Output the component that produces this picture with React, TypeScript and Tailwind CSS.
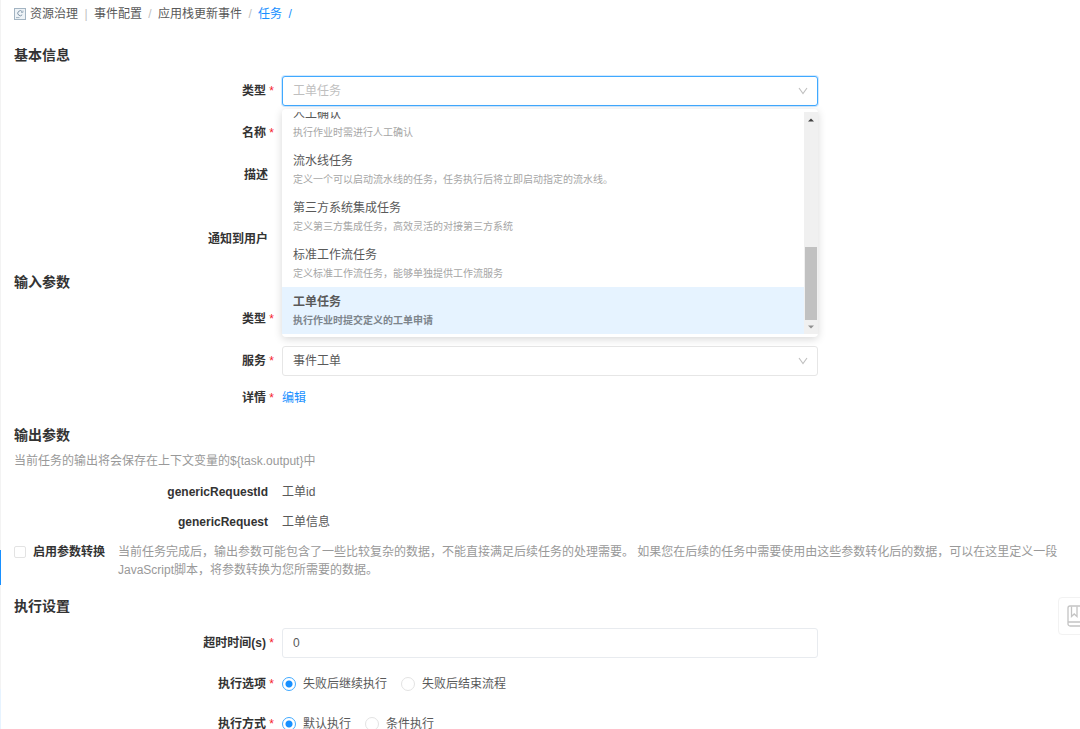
import { ReactNode, useState } from 'react';
import { clsx } from 'clsx';

const taskTypes = [
  { name: '人工确认', desc: '执行作业时需进行人工确认' },
  { name: '流水线任务', desc: '定义一个可以启动流水线的任务，任务执行后将立即启动指定的流水线。' },
  { name: '第三方系统集成任务', desc: '定义第三方集成任务，高效灵活的对接第三方系统' },
  { name: '标准工作流任务', desc: '定义标准工作流任务，能够单独提供工作流服务' },
  { name: '工单任务', desc: '执行作业时提交定义的工单申请' },
];

const fieldBorder = 'border border-[#e8ebef] rounded-[3px] bg-white outline-none';

function SectionTitle({ children }: { children: ReactNode }) {
  return <h2 className="text-sm leading-5 font-bold text-[#333]">{children}</h2>;
}

function Row({
  label,
  htmlFor,
  required,
  className,
  children,
}: {
  label: string;
  htmlFor?: string;
  required?: boolean;
  className?: string;
  children: ReactNode;
}) {
  const Label = htmlFor ? 'label' : 'span';

  return (
    <div className={clsx('grid grid-cols-[1fr_2fr_1fr] items-center', className)}>
      <Label htmlFor={htmlFor} className="flex items-center justify-end pr-2 font-bold text-[#333]">
        {label}
        <span className={clsx('text-right font-normal text-[#f5222d]', required ? 'w-2' : 'w-1.5')}>
          {required && '*'}
        </span>
      </Label>
      {children}
    </div>
  );
}

function Select({ id, options, open }: { id: string; options: string[]; open?: boolean }) {
  return (
    <div className="relative">
      <select
        id={id}
        className={clsx(
          'block w-full h-[30px] pl-[10px] pr-8 appearance-none rounded-[3px] border bg-white outline-none',
          open
            ? 'border-[#40a9ff] text-[#bfbfbf] shadow-[0_0_0_1px_rgba(24,144,255,0.2)]'
            : 'border-[#e6e6e6] text-[#595959]',
        )}
      >
        {options.map((option) => (
          <option key={option}>{option}</option>
        ))}
      </select>
      <svg
        viewBox="0 0 10 10"
        className="absolute right-[10px] top-[10px] size-[10px] pointer-events-none"
        fill="none"
        stroke="#bfbfbf"
        strokeWidth="1.1"
      >
        <path d="M1 2 L5 7.6 L9 2" />
      </svg>
    </div>
  );
}

function TaskTypeMenu() {
  return (
    <div className="absolute top-[33px] inset-x-0 z-10 flex rounded-[4px] bg-white py-[3px] shadow-[0_2px_8px_rgba(0,0,0,0.16)]">
      <ul role="listbox" aria-label="类型" className="flex-1 h-[222px] flex flex-col justify-end overflow-hidden">
        {taskTypes.map((type, index) => {
          const selected = index === taskTypes.length - 1;

          return (
            <li
              key={type.name}
              role="option"
              aria-selected={selected}
              className={clsx('shrink-0 h-[47px] px-[11px] pt-[5px]', selected && 'bg-[#e6f3ff] font-bold')}
            >
              <p className="leading-5 text-[#595959]">{type.name}</p>
              <p className={clsx('text-[10px] leading-[18px]', selected ? 'text-[#7d858c]' : 'text-[#a6a6a6]')}>
                {type.desc}
              </p>
            </li>
          );
        })}
      </ul>
      <div className="w-[14px] flex flex-col items-center justify-end bg-[#f0f0f0]">
        <svg viewBox="0 0 6 4" className="w-[6px] h-1 mt-[6px] mb-auto" fill="#404040">
          <path d="M0 3.5 L3 0.5 L6 3.5 Z" />
        </svg>
        <div className="w-3 h-[73px] bg-[#c1c1c1]" />
        <svg viewBox="0 0 6 4" className="w-[6px] h-1 my-[5px]" fill="#909090">
          <path d="M0 0.5 L3 3.5 L6 0.5 Z" />
        </svg>
      </div>
    </div>
  );
}

function RadioGroup({ name, label, options }: { name: string; label: string; options: string[] }) {
  const [value, setValue] = useState(options[0]);

  return (
    <div role="radiogroup" aria-label={label} className="flex items-center gap-[14px] text-[#595959]">
      {options.map((option) => (
        <label key={option} className="flex items-center gap-[7px]">
          <input
            type="radio"
            name={name}
            checked={value === option}
            onChange={() => setValue(option)}
            className="size-[14px] appearance-none rounded-full border border-[#e3e3e3] bg-white checked:border-[#40a9ff] checked:bg-[radial-gradient(circle,#1890ff_3px,transparent_4px)]"
          />
          {option}
        </label>
      ))}
    </div>
  );
}

function Breadcrumb() {
  return (
    <nav className="flex items-center h-7 text-[#595959]">
      <svg viewBox="0 0 12 12" className="size-3 mr-1" fill="none" stroke="#a3b4c2" strokeWidth="1">
        <rect x="0.5" y="0.5" width="11" height="11" fill="#eef3f7" />
        <path d="M8.2 3.6 A2.5 2.5 0 1 0 8.2 6.8" stroke="#8095a8" />
        <path d="M9 2.5 V4.4 H7 M2 9.6 H5.5" />
      </svg>
      <a href="#governance">资源治理</a>
      <span className="w-4 text-center text-[#bfbfbf]">|</span>
      <a href="#events">事件配置</a>
      <span className="w-4 text-center text-[#bfbfbf]">/</span>
      <a href="#stack">应用栈更新事件</a>
      <span className="w-4 text-center text-[#bfbfbf]">/</span>
      <a href="#task" className="text-[#1890ff]">
        任务
      </a>
      <span className="w-4 text-center text-[#1890ff]">/</span>
    </nav>
  );
}

export default function App() {
  const [timeout, setTimeout] = useState('0');

  return (
    <div className="relative flex h-screen overflow-hidden bg-white text-xs font-['Liberation_Sans','Noto_Sans_CJK_SC',sans-serif]">
      {/* edge of the collapsed side menu */}
      <div className="w-px shrink-0 flex flex-col bg-[#f3f3f3]">
        <div className="mt-[550px] h-[35px] shrink-0 bg-[#1890ff]" />
        <div className="mt-[104px] flex-1 bg-[#e6f3ff]" />
      </div>

      <main className="flex-1 min-w-0 pl-[13px] -mr-[6px]">
        <Breadcrumb />

        <section className="pt-[17px]">
          <SectionTitle>基本信息</SectionTitle>
          <div className="mt-[11px] flex flex-col gap-3">
            <Row label="类型" htmlFor="task-type" required>
              <div className="relative">
                <Select id="task-type" options={['工单任务']} open />
                <TaskTypeMenu />
              </div>
            </Row>
            <Row label="名称" htmlFor="task-name" required>
              <input id="task-name" className={clsx('h-[30px] px-[10px]', fieldBorder)} />
            </Row>
            <Row label="描述" htmlFor="task-desc" className="[&>label]:self-start [&>label]:h-[30px]">
              <textarea id="task-desc" className={clsx('h-[52px] px-[10px] resize-none', fieldBorder)} />
            </Row>
            <Row label="通知到用户" htmlFor="task-notify">
              <input id="task-notify" className={clsx('h-[30px] px-[10px]', fieldBorder)} />
            </Row>
          </div>
        </section>

        <section className="pt-[18px]">
          <SectionTitle>输入参数</SectionTitle>
          <div className="mt-3 flex flex-col gap-3">
            <Row label="类型" htmlFor="input-type" required>
              <input id="input-type" className={clsx('h-[30px] px-[10px]', fieldBorder)} />
            </Row>
            <Row label="服务" htmlFor="service" required>
              <Select id="service" options={['事件工单']} />
            </Row>
            <Row label="详情" required className="h-5">
              <a href="#edit" className="justify-self-start text-[#1890ff]">
                编辑
              </a>
            </Row>
          </div>
        </section>

        <section className="pt-[17px]">
          <SectionTitle>输出参数</SectionTitle>
          <p className="mt-[6px] leading-5 text-[#999]">当前任务的输出将会保存在上下文变量的{'${task.output}'}中</p>
          <div className="mt-[11px] flex flex-col gap-[10px] text-[#595959]">
            <Row label="genericRequestId" className="h-5">
              <span>工单id</span>
            </Row>
            <Row label="genericRequest" className="h-5">
              <span>工单信息</span>
            </Row>
          </div>
          <div className="mt-[11px] mr-[18px] flex items-start leading-[18px]">
            <label className="shrink-0 flex items-center gap-[7px] font-bold text-[#333]">
              <input
                type="checkbox"
                className="size-3 appearance-none rounded-[2px] border border-[#e3e3e3] bg-white checked:border-[#1890ff] checked:bg-[#1890ff]"
              />
              启用参数转换
            </label>
            <p className="ml-[13px] text-[#999]">
              当前任务完成后，输出参数可能包含了一些比较复杂的数据，不能直接满足后续任务的处理需要。
              如果您在后续的任务中需要使用由这些参数转化后的数据，可以在这里定义一段JavaScript脚本，将参数转换为您所需要的数据。
            </p>
          </div>
        </section>

        <section className="pt-[17px]">
          <SectionTitle>执行设置</SectionTitle>
          <div className="mt-3 flex flex-col gap-3">
            <Row label="超时时间(s)" htmlFor="timeout" required>
              <input
                id="timeout"
                value={timeout}
                onChange={(e) => setTimeout(e.target.value)}
                className={clsx('h-[30px] px-[10px] text-[#595959]', fieldBorder)}
              />
            </Row>
            <Row label="执行选项" required className="h-7">
              <RadioGroup name="option" label="执行选项" options={['失败后继续执行', '失败后结束流程']} />
            </Row>
            <Row label="执行方式" required className="h-7">
              <RadioGroup name="mode" label="执行方式" options={['默认执行', '条件执行']} />
            </Row>
          </div>
        </section>
      </main>

      <button
        type="button"
        aria-label="帮助文档"
        className="absolute -right-[18px] top-[597px] w-10 h-[38px] pl-2 flex items-center rounded-[4px] border border-[#f2f2f2] bg-white"
      >
        <svg viewBox="0 0 22 22" className="size-[22px]" fill="none" stroke="#c4c4c4" strokeWidth="1.3">
          <path d="M3 1 H20 V21 H3 A2 2 0 0 1 1 19 V3 A2 2 0 0 1 3 1 Z" />
          <path d="M1 17 H20 M4.5 1.5 V11.5 L7.2 9 L10 11.5 V1.5" />
        </svg>
      </button>
    </div>
  );
}
